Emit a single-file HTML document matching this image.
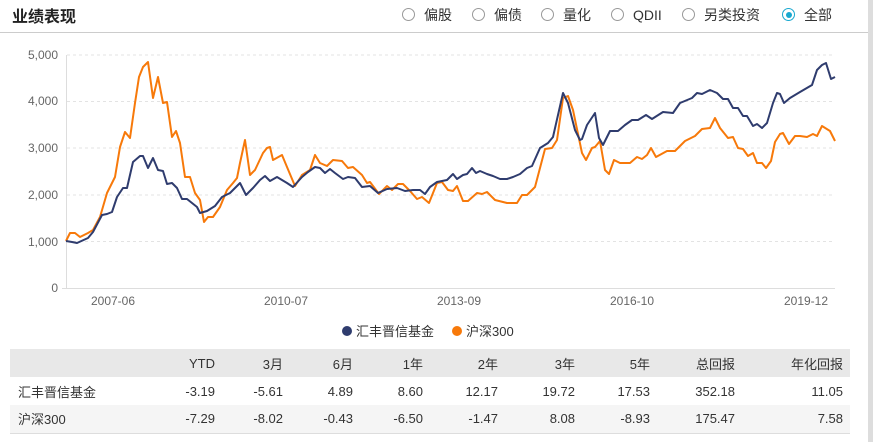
<!DOCTYPE html>
<html><head><meta charset="utf-8"><style>
*{margin:0;padding:0;box-sizing:border-box}
body{width:873px;height:442px;background:#fff;font-family:"Liberation Sans","Noto Sans CJK SC",sans-serif;position:relative;overflow:hidden;color:#333}
.sb{position:absolute;right:0;top:0;width:5px;height:442px;background:#ddd}
.title{position:absolute;left:12px;top:3px;font-size:16px;font-weight:bold;color:#222}
.hr{position:absolute;left:0;top:32px;width:868px;height:1px;background:#ccc}
.r{position:absolute;top:7px;font-size:14px;color:#333;line-height:16px}
.r i{position:absolute;left:0;top:1px;width:13px;height:13px;border:1px solid #999;border-radius:50%}
.r span{position:absolute;left:22px;top:0;white-space:nowrap}
.r.on i{border-color:#19a8cf}
.r.on i:after{content:"";position:absolute;left:2.5px;top:2.5px;width:6px;height:6px;border-radius:50%;background:#19a8cf}
table{position:absolute;left:10px;top:349px;width:840px;border-collapse:collapse;font-size:13px;color:#333}
td{height:28px;text-align:right;padding-right:7px}
td:first-child{text-align:left;padding-left:8px}
tr.h td{background:#e8e8e8}
tr.g td{background:#f5f5f5}
table{border-bottom:1px solid #ddd}
</style></head><body>
<div class="sb"></div>
<div class="title">业绩表现</div>
<div class="r" style="left:402px"><i></i><span>偏股</span></div>
<div class="r" style="left:472px"><i></i><span>偏债</span></div>
<div class="r" style="left:541px"><i></i><span>量化</span></div>
<div class="r" style="left:611px"><i></i><span>QDII</span></div>
<div class="r" style="left:682px"><i></i><span>另类投资</span></div>
<div class="r on" style="left:782px"><i></i><span>全部</span></div>
<div class="hr"></div>
<svg style="position:absolute;left:0;top:0" width="873" height="345" font-family="Liberation Sans" font-size="12" fill="#666">
<g stroke="#e3e3e3" stroke-dasharray="3,3">
<line x1="67" y1="55" x2="835" y2="55"/><line x1="67" y1="101.5" x2="835" y2="101.5"/><line x1="67" y1="148" x2="835" y2="148"/><line x1="67" y1="195" x2="835" y2="195"/><line x1="67" y1="241.5" x2="835" y2="241.5"/>
</g>
<line x1="66.5" y1="55" x2="66.5" y2="288" stroke="#ddd"/>
<line x1="62" y1="288.5" x2="835" y2="288.5" stroke="#ddd"/>
<g text-anchor="end"><text x="58" y="59">5,000</text><text x="58" y="105">4,000</text><text x="58" y="152">3,000</text><text x="58" y="199">2,000</text><text x="58" y="246">1,000</text><text x="58" y="292">0</text></g>
<g text-anchor="middle"><text x="113" y="305">2007-06</text><text x="286" y="305">2010-07</text><text x="459" y="305">2013-09</text><text x="632" y="305">2016-10</text><text x="806" y="305">2019-12</text></g>
<polyline fill="none" stroke="#f7790a" stroke-width="2" stroke-linejoin="round" points="66,241 70,233 75,233 80,237 88,233 93,230 100,217 107,193 115,177 120,147 125,132 130,138 135,103 139,77 143,67 148,62 153,98 158,77 163,103 167,102 172,137 176,131 180,143 185,177 190,177 195,193 200,200 204,222 208,217 213,217 220,207 227,190 233,183 237,178 240,163 245,140 250,175 255,170 263,153 267,148 270,147 273,160 282,155 287,167 295,186 302,175 310,170 315,155 320,163 327,166 333,160 342,161 348,168 353,167 362,175 367,183 370,182 379,194 387,186 392,190 398,184 403,184 410,191 417,199 422,197 429,203 437,183 442,182 448,190 453,191 457,186 463,201 468,201 477,193 482,194 487,192 495,200 507,203 517,203 522,195 527,195 535,187 545,149 552,148 557,140 563,98 568,96 573,110 582,153 586,160 592,148 595,147 600,141 605,170 609,174 614,160 620,163 630,163 637,157 642,159 647,155 651,148 656,157 667,151 675,151 678,148 685,141 695,136 702,129 710,128 715,118 720,128 728,138 733,137 738,148 743,149 748,156 753,153 757,163 762,163 766,168 771,161 775,142 780,134 783,133 789,144 795,136 800,136 807,137 813,134 817,136 822,126 830,131 835,141"/>
<polyline fill="none" stroke="#2f3c6e" stroke-width="2" stroke-linejoin="round" points="66,241 72,242 77,243 88,238 93,232 102,215 107,214 112,212 117,197 123,188 127,188 133,162 140,156 143,156 148,168 153,158 158,170 163,171 167,184 172,183 177,188 182,199 187,199 192,203 197,207 200,213 207,211 215,206 222,197 230,193 240,183 246,195 253,188 260,180 265,176 270,181 277,177 287,183 290,185 293,187 302,177 308,172 315,167 320,168 325,173 330,169 335,173 343,179 348,177 355,178 362,187 370,186 378,193 387,189 397,188 405,191 413,190 420,190 425,194 430,187 437,182 447,180 453,174 457,179 463,175 467,174 472,168 476,173 480,171 487,174 493,176 500,179 507,179 513,177 520,174 527,168 532,166 540,148 548,143 553,137 563,93 568,103 575,130 580,140 582,139 587,125 595,113 599,138 603,145 610,131 618,131 625,125 632,120 638,120 646,115 652,119 663,112 673,113 680,103 692,98 697,93 702,94 710,90 717,93 723,99 728,99 733,108 738,108 743,116 747,116 753,126 757,124 762,128 767,123 773,103 777,93 780,94 784,103 790,98 800,92 812,85 817,70 822,65 826,63 831,79 835,77"/>
<circle cx="347" cy="331" r="5" fill="#2f3c6e"/>
<text x="356" y="336" font-family="Liberation Sans,Noto Sans CJK SC" font-size="13" fill="#333">汇丰晋信基金</text>
<circle cx="457" cy="331" r="5" fill="#f7790a"/>
<text x="466" y="336" font-family="Liberation Sans,Noto Sans CJK SC" font-size="13" fill="#333">沪深300</text>
</svg>
<table>
<colgroup><col style="width:140px"><col style="width:72px"><col style="width:68px"><col style="width:70px"><col style="width:70px"><col style="width:75px"><col style="width:77px"><col style="width:75px"><col style="width:85px"><col style="width:108px"></colgroup>
<tr class="h"><td></td><td>YTD</td><td>3月</td><td>6月</td><td>1年</td><td>2年</td><td>3年</td><td>5年</td><td>总回报</td><td>年化回报</td></tr>
<tr><td>汇丰晋信基金</td><td>-3.19</td><td>-5.61</td><td>4.89</td><td>8.60</td><td>12.17</td><td>19.72</td><td>17.53</td><td>352.18</td><td>11.05</td></tr>
<tr class="g"><td>沪深300</td><td>-7.29</td><td>-8.02</td><td>-0.43</td><td>-6.50</td><td>-1.47</td><td>8.08</td><td>-8.93</td><td>175.47</td><td>7.58</td></tr>
</table>
</body></html>
